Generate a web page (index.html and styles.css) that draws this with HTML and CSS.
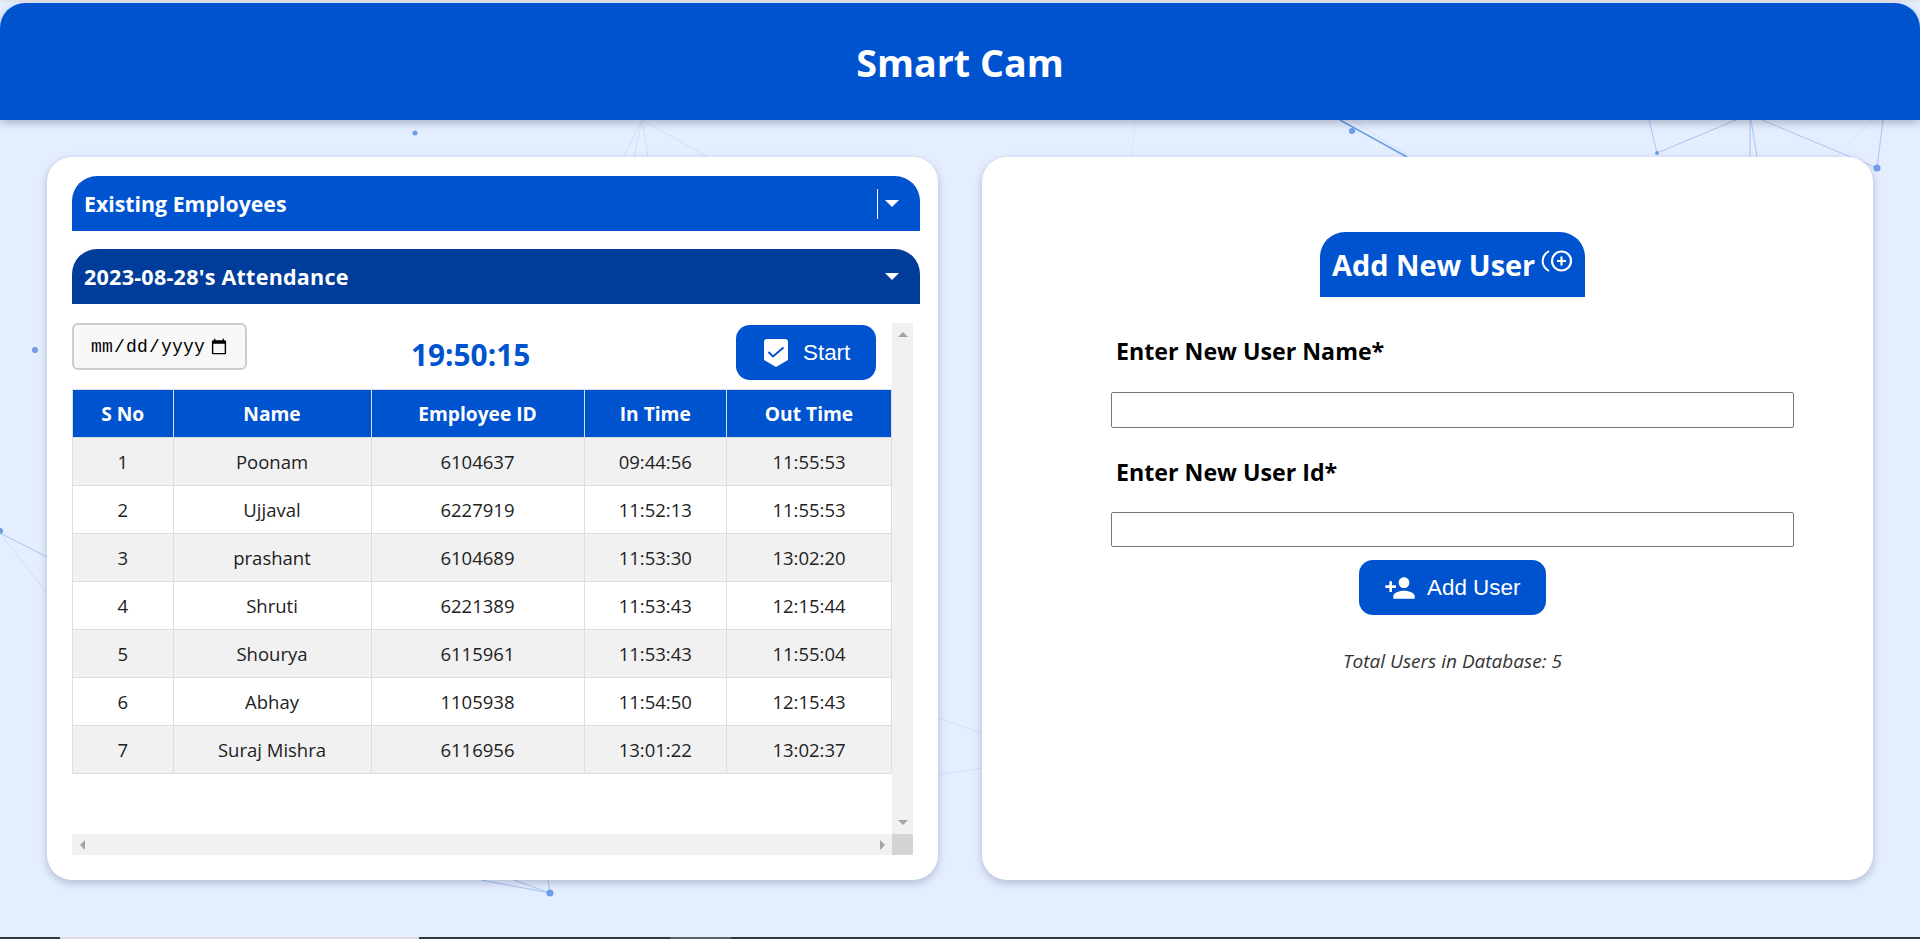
FILE: index.html
```html
<!DOCTYPE html>
<html lang="en">
<head>
    <meta charset="UTF-8">
    <meta name="viewport" content="width=device-width, initial-scale=1.0">
    <title>Smart Cam</title>
    <link rel="stylesheet" href="styles.css">
</head>
<body>
    <svg class="particles" width="1920" height="939" viewBox="0 0 1920 939">
        <g class="line-soft">
            <line x1="642" y1="120" x2="623" y2="157"/>
            <line x1="642" y1="120" x2="634" y2="157"/>
            <line x1="642" y1="120" x2="648" y2="157"/>
            <line x1="642" y1="120" x2="708" y2="157"/>
            <line x1="1352" y1="120" x2="1410" y2="157"/>
            <line x1="0" y1="533" x2="47" y2="593"/>
            <line x1="938" y1="718" x2="982" y2="733"/>
            <line x1="938" y1="775" x2="982" y2="768"/>
        </g>
        <g class="line-faint">
            <line x1="1135" y1="120" x2="1132" y2="157"/>
            <line x1="1872" y1="120" x2="1836" y2="157"/>
        </g>
        <g class="line-mid">
            <line x1="1649" y1="120" x2="1657" y2="153"/>
            <line x1="1657" y1="153" x2="1736" y2="120"/>
            <line x1="1750" y1="120" x2="1750" y2="157"/>
            <line x1="1751" y1="120" x2="1757" y2="157"/>
            <line x1="1762" y1="120" x2="1877" y2="168"/>
            <line x1="1883" y1="120" x2="1877" y2="168"/>
            <line x1="0" y1="533" x2="47" y2="557"/>
            <line x1="481" y1="880" x2="550" y2="893"/>
            <line x1="514" y1="880" x2="550" y2="893"/>
            <line x1="548" y1="880" x2="550" y2="893"/>
        </g>
        <line class="line-strong" x1="1340" y1="120" x2="1407" y2="157"/>
        <g class="dots">
            <circle cx="415" cy="133" r="2.500"/>
            <circle cx="35" cy="350" r="3"/>
            <circle cx="1352" cy="131" r="3"/>
            <circle cx="1657" cy="153" r="2"/>
            <circle cx="1877" cy="168" r="3.500"/>
            <circle cx="0" cy="531" r="3"/>
            <circle cx="550" cy="893" r="3.500"/>
        </g>
    </svg>

    <div class="page">
        <header class="topbar">
            <h1>Smart Cam</h1>
        </header>

        <main class="content">
            <section class="card card-left">
                <div class="accordion">
                    <span>Existing Employees</span>
                    <i class="divider"></i>
                    <i class="caret"></i>
                </div>
                <div class="accordion accordion-dark">
                    <span>2023-08-28's Attendance</span>
                    <i class="caret"></i>
                </div>

                <div class="scroll-box">
                    <div class="scroll-inner">
                        <div class="toolbar">
                            <input type="date" class="date-input">
                            <div class="clock">19:50:15</div>
                            <button class="btn btn-start" type="button">
                                <svg width="24" height="28" viewBox="0 0 24 28">
                                    <path d="M3 0H21a3 3 0 0 1 3 3V21L12 28 0 21V3a3 3 0 0 1 3-3z" fill="#fff"/>
                                    <path d="M4.500 13l4.500 4.500L19.500 8.500" fill="none" stroke="#0053cf" stroke-width="2"/>
                                </svg>
                                Start
                            </button>
                        </div>
                        <table class="attendance">
                            <thead>
                                <tr>
                                    <th class="col-no">S No</th>
                                    <th class="col-name">Name</th>
                                    <th class="col-id">Employee ID</th>
                                    <th class="col-in">In Time</th>
                                    <th>Out Time</th>
                                </tr>
                            </thead>
                            <tbody>
                                <tr><td>1</td><td>Poonam</td><td>6104637</td><td>09:44:56</td><td>11:55:53</td></tr>
                                <tr><td>2</td><td>Ujjaval</td><td>6227919</td><td>11:52:13</td><td>11:55:53</td></tr>
                                <tr><td>3</td><td>prashant</td><td>6104689</td><td>11:53:30</td><td>13:02:20</td></tr>
                                <tr><td>4</td><td>Shruti</td><td>6221389</td><td>11:53:43</td><td>12:15:44</td></tr>
                                <tr><td>5</td><td>Shourya</td><td>6115961</td><td>11:53:43</td><td>11:55:04</td></tr>
                                <tr><td>6</td><td>Abhay</td><td>1105938</td><td>11:54:50</td><td>12:15:43</td></tr>
                                <tr><td>7</td><td>Suraj Mishra</td><td>6116956</td><td>13:01:22</td><td>13:02:37</td></tr>
                            </tbody>
                        </table>
                    </div>
                    <div class="bar-v">
                        <i class="arrow arrow-up"></i>
                        <i class="arrow arrow-down"></i>
                    </div>
                    <div class="bar-h">
                        <i class="arrow arrow-left"></i>
                        <i class="arrow arrow-right"></i>
                    </div>
                    <div class="bar-corner"></div>
                </div>
            </section>

            <section class="card card-right">
                <h2 class="pill-title">
                    Add New User
                    <svg class="pill-icon" width="31" height="22" viewBox="0 0 31 22">
                        <circle cx="20.500" cy="11" r="9.500" fill="none" stroke="#fff" stroke-width="2.200"/>
                        <path d="M20.500 6.500v9M16 11h9" stroke="#fff" stroke-width="2.200"/>
                        <path d="M8 1C-0.500 6-0.500 16 8 21" fill="none" stroke="#fff" stroke-width="2"/>
                    </svg>
                </h2>
                <form class="user-form">
                    <label for="user_name">Enter New User Name*</label>
                    <input type="text" id="user_name" name="user_name">
                    <label for="user_id" class="label-second">Enter New User Id*</label>
                    <input type="text" id="user_id" name="user_id">
                    <button class="btn btn-add" type="button">
                        <svg width="32" height="32" viewBox="0 0 24 24">
                            <path fill="#fff" d="M15 12c2.210 0 4-1.790 4-4s-1.790-4-4-4-4 1.790-4 4 1.790 4 4 4zm-9-2V7H4v3H1v2h3v3h2v-3h3v-2H6zm9 4c-2.670 0-8 1.340-8 4v2h16v-2c0-2.660-5.330-4-8-4z"/>
                        </svg>
                        Add User
                    </button>
                    <p class="total">Total Users in Database: 5</p>
                </form>
            </section>
        </main>
    </div>

    <div class="taskbar">
        <i class="task-active"></i>
        <i class="task-hover"></i>
    </div>
</body>
</html>
```

FILE: styles.css
```css
body {
    margin: 0;
    height: 939px;
    overflow: hidden;
    background-color: #e4eefe;
    font-family: "Open Sans", "Noto Sans", sans-serif;
    display: flex;
    flex-direction: column;
}

.particles {
    position: absolute;
    top: 0;
    left: 0;
}

.line-soft line {
    stroke: #d0dff9;
    stroke-width: 1;
}

.line-faint line {
    stroke: #dce7fb;
    stroke-width: 1;
}

.line-mid line {
    stroke: #a9c6f3;
    stroke-width: 1;
}

.line-strong {
    stroke: #6f9ee8;
    stroke-width: 1.500;
}

.dots circle {
    fill: #6f9ee8;
}

.page {
    flex: 1;
    position: relative;
    display: flex;
    flex-direction: column;
    padding-top: 1px;
    border-top: 2px solid #e2e4e8;
}

.topbar {
    height: 117px;
    background-color: #0053cf;
    border-radius: 25px 25px 0 0;
    box-shadow: 0 3px 8px rgba(0, 0, 40, 0.25);
    display: flex;
    justify-content: center;
    align-items: center;
}

.topbar h1 {
    margin: 2px 0 0;
    color: #fff;
    font-size: 37.700px;
    font-weight: 700;
}

.content {
    display: flex;
    gap: 44px;
    padding: 37px 47px 0;
}

.card {
    flex: 1;
    height: 723px;
    box-sizing: border-box;
    background-color: #fff;
    border-radius: 25px;
    box-shadow: 0 3px 8px rgba(0, 0, 60, 0.22);
}

.card-left {
    padding: 19px 18px 0 25px;
}

.accordion {
    height: 55px;
    margin-bottom: 18px;
    padding: 0 21px 0 12px;
    background-color: #0053cf;
    border-radius: 25px 25px 0 0;
    color: #fff;
    font-size: 21.300px;
    font-weight: 700;
    display: flex;
    align-items: center;
}

.accordion span {
    flex: 1;
}

.accordion-dark {
    background-color: #003d9a;
    margin-bottom: 19px;
    font-size: 21.500px;
    letter-spacing: 0.250px;
}

.divider {
    width: 1px;
    height: 30px;
    margin-right: 7px;
    background-color: #fff;
}

.caret {
    width: 0;
    height: 0;
    border-left: 7px solid transparent;
    border-right: 7px solid transparent;
    border-top: 7px solid #fff;
}

.scroll-box {
    height: 532px;
    margin-right: 7px;
    display: grid;
    grid-template-columns: 1fr 21px;
    grid-template-rows: 1fr 21px;
}

.toolbar {
    height: 66px;
    display: flex;
    align-items: flex-start;
}

.date-input {
    width: 175px;
    height: 47px;
    box-sizing: border-box;
    padding: 0 17px 0 16px;
    background-color: #f8f8f8;
    border: 2px solid #ccc;
    border-radius: 6px;
    font-family: "Liberation Mono", monospace;
    font-size: 18px;
    letter-spacing: 0.200px;
}

.date-input::-webkit-calendar-picker-indicator {
    margin: 0;
    padding: 0;
    width: 18px;
    height: 18px;
}

.clock {
    margin: 11px 0 0 164px;
    color: #0053cf;
    font-size: 29.800px;
    font-weight: 700;
}

.btn {
    height: 55px;
    background-color: #0053cf;
    border: none;
    border-radius: 14px;
    color: #fff;
    font-family: "Liberation Sans", Arial, sans-serif;
    font-size: 22.400px;
    cursor: pointer;
    display: flex;
    align-items: center;
}

.btn-start {
    width: 140px;
    margin: 2px 16px 0 auto;
    padding: 0 0 0 28px;
    gap: 15px;
}

.attendance {
    width: 820px;
    border-collapse: collapse;
    table-layout: fixed;
    font-size: 18.500px;
    color: #222;
}

.attendance th,
.attendance td {
    height: 48px;
    padding: 0;
    box-sizing: border-box;
    border: 1px solid #ddd;
    text-align: center;
}

.attendance th {
    background-color: #0053cf;
    color: #fff;
    font-size: 19.200px;
    font-weight: 700;
}

.attendance tbody tr:nth-child(odd) {
    background-color: #f1f1f1;
}

.col-no { width: 100.500px; }
.col-name { width: 198px; }
.col-id { width: 213px; }
.col-in { width: 142.500px; }

.bar-v {
    background-color: #f1f1f1;
    padding: 9px 0;
    display: flex;
    flex-direction: column;
    justify-content: space-between;
    align-items: center;
}

.bar-h {
    background-color: #f1f1f1;
    padding: 0 7px 0 8px;
    display: flex;
    justify-content: space-between;
    align-items: center;
}

.bar-corner {
    background-color: #d4d4d4;
}

.arrow {
    width: 0;
    height: 0;
}

.arrow-up {
    border-left: 5px solid transparent;
    border-right: 5px solid transparent;
    border-bottom: 5px solid #a3a3a3;
}

.arrow-down {
    border-left: 5px solid transparent;
    border-right: 5px solid transparent;
    border-top: 5px solid #a3a3a3;
}

.arrow-left {
    border-top: 5px solid transparent;
    border-bottom: 5px solid transparent;
    border-right: 5px solid #a3a3a3;
}

.arrow-right {
    border-top: 5px solid transparent;
    border-bottom: 5px solid transparent;
    border-left: 5px solid #a3a3a3;
}

.card-right {
    padding: 75px 0 0 50px;
    display: flex;
    flex-direction: column;
    align-items: center;
}

.pill-title {
    height: 65px;
    width: 265px;
    box-sizing: border-box;
    margin: 0;
    padding: 0 0 0 12px;
    background-color: #0053cf;
    border-radius: 25px 25px 0 0;
    color: #fff;
    font-size: 28.900px;
    font-weight: 700;
    display: flex;
    align-items: center;
    gap: 6px;
}

.pill-icon {
    margin-bottom: 8px;
}

.user-form {
    width: 683px;
    display: flex;
    flex-direction: column;
}

.user-form label {
    margin: 38px 0 24px 5px;
    color: #000;
    font-size: 23.200px;
    font-weight: 700;
    line-height: 33px;
}

.user-form .label-second {
    margin: 28px 0 23px 5px;
}

.user-form input {
    height: 35.500px;
    box-sizing: border-box;
    border: 1px solid #767676;
    border-radius: 2px;
}

.btn-add {
    align-self: center;
    width: 187px;
    margin-top: 13px;
    padding: 0 0 0 25px;
    gap: 11px;
}

.total {
    margin: 33px 0 0;
    color: #333;
    font-size: 19px;
    font-style: italic;
    font-weight: 400;
    text-align: center;
}

.taskbar {
    height: 2px;
    position: relative;
    background-color: #2a3b42;
    display: flex;
}

.task-active {
    width: 359px;
    margin-left: 60px;
    background-color: #ddd;
}

.task-hover {
    width: 61px;
    margin-left: 251px;
    background-color: #5a6366;
}
```
